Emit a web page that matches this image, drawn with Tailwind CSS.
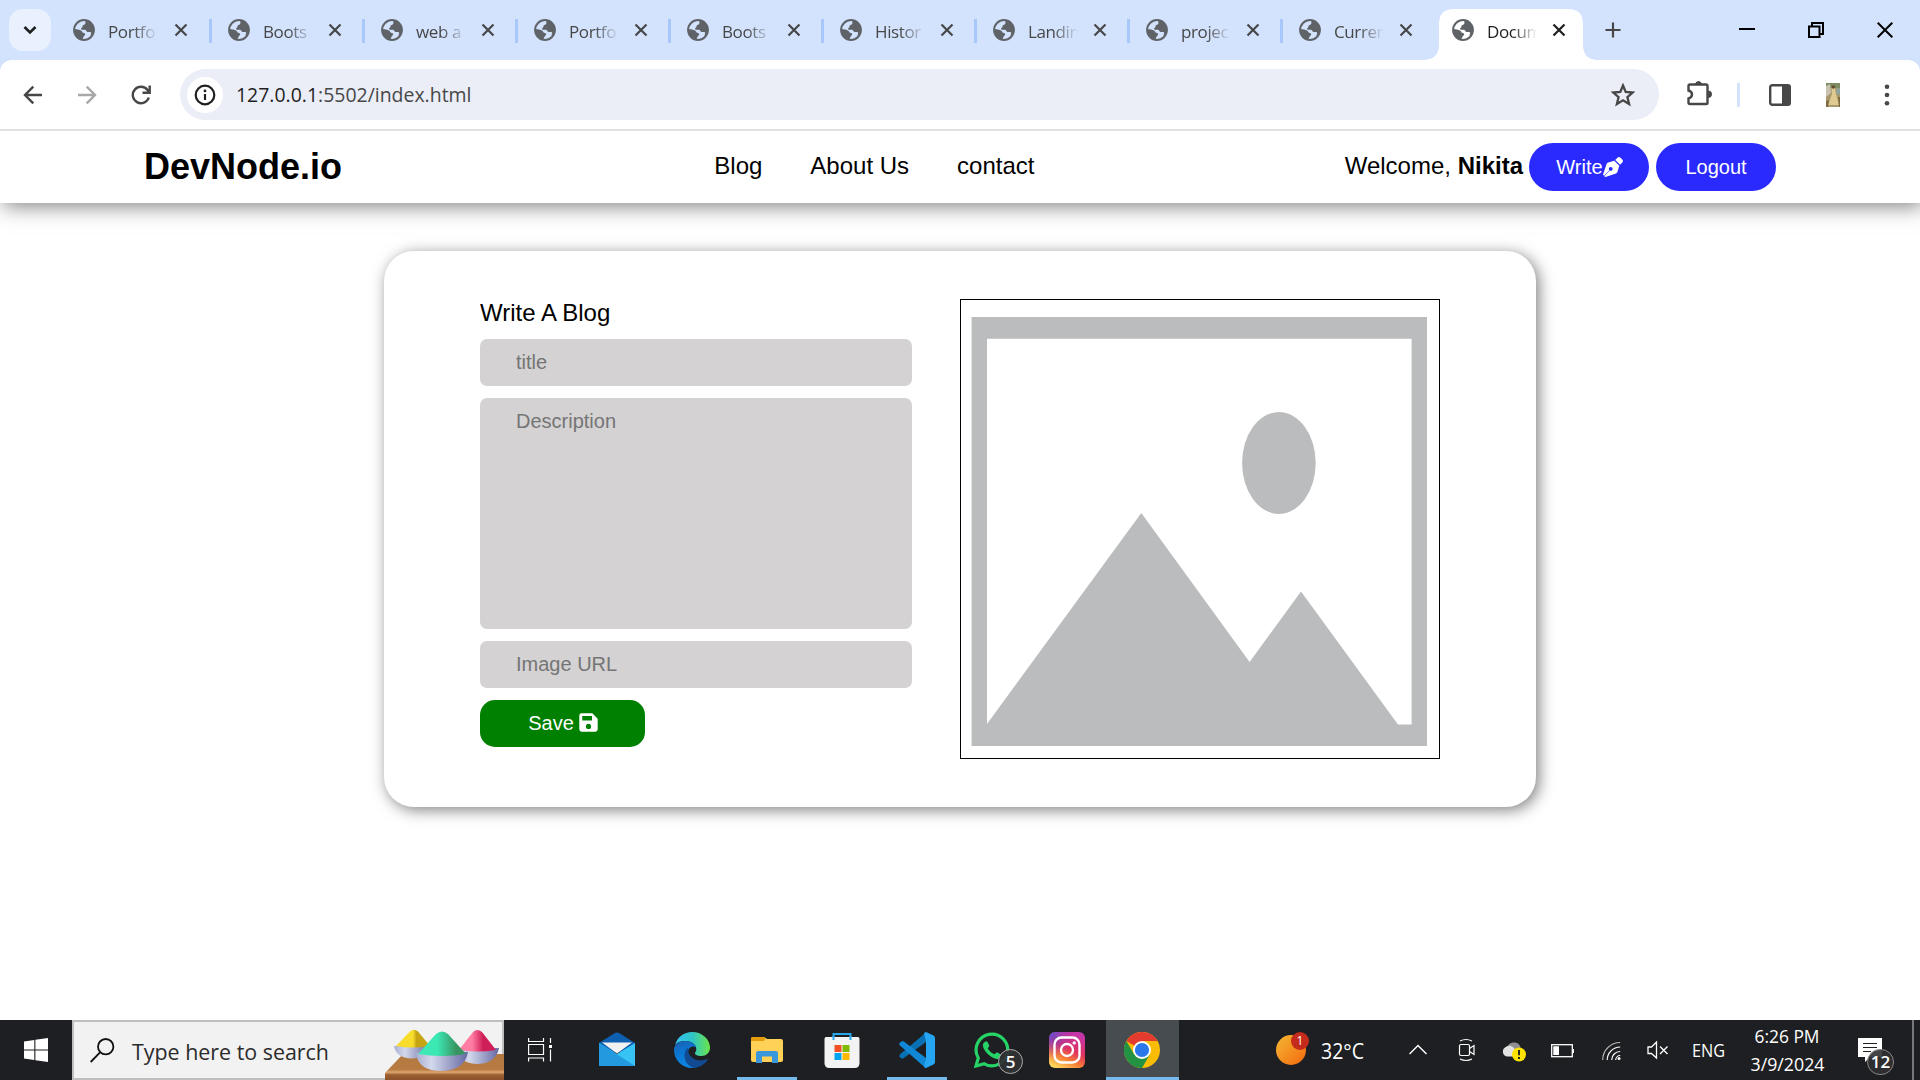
<!DOCTYPE html>
<html lang="en">
<head>
<meta charset="utf-8">
<title>Document</title>
<script src="https://cdn.jsdelivr.net/npm/@tailwindcss/browser@4"></script>
</head>
<body class="w-[1920px] h-[1080px] overflow-hidden bg-white flex flex-col font-['Open_Sans',sans-serif]">

<svg class="hidden">
  <symbol id="globe" viewBox="0 0 22 22">
    <circle cx="11" cy="11" r="9.900" fill="none" stroke="#5f6368" stroke-width="2"/>
    <path fill="#5f6368" d="M12.500 1.500 C12 4 13 4.500 11.500 5.500 C10 6.300 9.500 6 9.500 7.500 C9.500 9 8 8.500 8 10 C8 11 10 10.500 12 10.700 C13.600 11 13 12.600 14.500 13 C16 13.400 17 12.500 18 13.500 C18.500 14.200 17.500 16 17 17 C19.500 15.500 21 13 21 10.500 C21 6 17.500 2 12.500 1.500 Z"/>
    <path fill="#5f6368" d="M1.300 10 C4 10.500 6.500 10.500 8 11.500 C9.500 12.500 9 13.800 11 14 C12.500 14.300 12.500 15.500 11.500 16.500 C10.500 17.500 10 18.500 9.500 20.500 C4.500 20 1 15.500 1.300 10 Z"/>
  </symbol>
  <symbol id="cross" viewBox="0 0 14 14">
    <path d="M1.500 1.500 L12.500 12.500 M12.500 1.500 L1.500 12.500" stroke="currentColor" stroke-width="2.200" fill="none"/>
  </symbol>
</svg>

<!-- Tab strip -->
<header class="h-[60px] shrink-0 bg-[#d3e3fd] flex text-[17px] text-[#474747]">
  <div class="w-[57px] pl-[9px] pt-[9px]">
    <div class="w-[42px] h-[42px] rounded-[14px] bg-[#e9f0fe] flex items-center justify-center">
      <svg class="w-[14px] h-[10px]" viewBox="0 0 14 10"><path d="M1.500 2 L7 7.500 L12.500 2" fill="none" stroke="#1f1f1f" stroke-width="2.600"/></svg>
    </div>
  </div>
  <nav id="tabs" class="flex"></nav>
  <div class="flex-1 flex items-center text-black">
    <svg class="w-4 h-4 ml-[17px]" viewBox="0 0 16 16"><path d="M8 0.500 V15.500 M0.500 8 H15.500" stroke="#474747" stroke-width="2.200"/></svg>
    <div class="ml-auto flex items-center gap-[53px] pr-[27px]">
      <svg class="w-4 h-4" viewBox="0 0 16 16"><path d="M0 7 H16" stroke="#000" stroke-width="2"/></svg>
      <svg class="w-4 h-4" viewBox="0 0 16 16" fill="none" stroke="#000" stroke-width="2"><path d="M1 4.500 H11.500 V15 H1 Z M4 4 V1 H15 V12 H12"/></svg>
      <svg class="w-4 h-4" viewBox="0 0 16 16"><path d="M0.700 0.700 L15.300 15.300 M15.300 0.700 L0.700 15.300" stroke="#000" stroke-width="2"/></svg>
    </div>
  </div>
</header>

<!-- Address bar -->
<div class="bg-[#d3e3fd] shrink-0">
  <div class="h-[71px] rounded-t-xl bg-white border-b-2 border-[#e1e1e1] flex items-center">
    <svg class="w-[20px] h-[20px] ml-[23px]" viewBox="0 0 20 20" fill="none" stroke="#474747" stroke-width="2.400"><path d="M19 10 H2.500 M10.300 1.700 L2 10 L10.300 18.300"/></svg>
    <svg class="w-[20px] h-[20px] ml-[34px]" viewBox="0 0 20 20" fill="none" stroke="#a8a8a8" stroke-width="2.400"><path d="M1 10 H17.500 M9.700 1.700 L18 10 L9.700 18.300"/></svg>
    <svg class="w-[20px] h-[20px] ml-[34px]" viewBox="0 0 20 20" fill="none" stroke="#474747" stroke-width="2.400"><path d="M17.800 12.500 A8.200 8.200 0 1 1 16.500 5 L18.500 7.500 M18.700 0.500 V7.700 H11.500"/></svg>
    <div class="ml-[29px] w-[1479px] h-[51px] rounded-full bg-[#ebeef7] flex items-center pl-[7px] pr-[24px]">
      <div class="w-9 h-9 rounded-full bg-white flex items-center justify-center">
        <svg class="w-[22px] h-[22px]" viewBox="0 0 22 22"><circle cx="11" cy="11" r="9.300" fill="none" stroke="#1f1f1f" stroke-width="2.200"/><path d="M11 10 V16" stroke="#1f1f1f" stroke-width="2.200"/><circle cx="11" cy="6.900" r="1.400" fill="#1f1f1f"/></svg>
      </div>
      <svg class="w-[240px] h-[30px] ml-[12px]" viewBox="0 0 240 30"><text x="1" y="22" font-size="20.500" textLength="235.500" lengthAdjust="spacingAndGlyphs" fill="#474747"><tspan fill="#1f1f1f">127.0.0.1</tspan>:5502/index.html</text></svg>
      <svg class="w-[24px] h-[24px] ml-auto" viewBox="0 0 24 24"><path d="M12 2.500 L14.700 9 L21.700 9.500 L16.400 14.100 L18.100 21 L12 17.300 L5.900 21 L7.600 14.100 L2.300 9.500 L9.300 9 Z" fill="none" stroke="#474747" stroke-width="2.300"/></svg>
    </div>
    <svg class="w-[26px] h-[26px] ml-[27px] -mt-[3px]" viewBox="0 0 26 26"><path d="M4 4.500 H20 Q21.500 4.500 21.500 6 V23 Q21.500 24 20 24 H4 Q2.500 24 2.500 22.500 V18.500 Q6 17.500 6 14.500 Q6 11.500 2.500 10.500 V6 Q2.500 4.500 4 4.500 Z" fill="none" stroke="#474747" stroke-width="2.400"/><path d="M9.500 3.700 A3.200 3.200 0 0 1 15.500 3.700 Z M22.300 11 A3.200 3.200 0 0 1 22.300 17.500 Z" fill="#474747" stroke="#474747"/></svg>
    <div class="w-[3px] h-6 bg-[#d3e3fd] ml-[25px]"></div>
    <svg class="w-[22px] h-[22px] ml-[29px]" viewBox="0 0 22 22"><rect x="1.200" y="1.200" width="19.600" height="19.600" rx="2" fill="none" stroke="#474747" stroke-width="2.400"/><path d="M13 1 H20 V21 H13 Z" fill="#474747"/></svg>
    <svg class="w-[14px] h-[24px] ml-[35px]" viewBox="0 0 14 24"><rect width="14" height="24" fill="#a8986c"/><path d="M0 0 H14 V5 H0 Z" fill="#7f8c62"/><path d="M0 3 L4 1 L5 10 L0 14 Z" fill="#c9c3b0"/><path d="M10 6 L14 5 V11 L11 12 Z" fill="#8fa3a0"/><path d="M5.500 5 H9 L10 11 L13 22 H2 L6 11 Z" fill="#dfca92"/><circle cx="7.300" cy="4" r="1.800" fill="#6a4b32"/><path d="M0 18 L3 17 L2 24 H0 Z M12 14 H14 V24 H13 Z" fill="#7d6a3e"/></svg>
    <svg class="w-[6px] h-[24px] ml-[44px]" viewBox="0 0 6 24" fill="#474747"><circle cx="3" cy="3.700" r="2.300"/><circle cx="3" cy="12" r="2.300"/><circle cx="3" cy="20.300" r="2.300"/></svg>
  </div>
</div>

<!-- Web page -->
<div class="flex-1 flex flex-col bg-white text-black overflow-hidden font-['Liberation_Sans',Arial,sans-serif]">
  <div class="h-[72px] shrink-0 flex items-center justify-between px-[144px] text-2xl shadow-[3px_3px_20px_rgba(0,0,0,0.5)]">
    <h1 class="text-[36px] font-bold">DevNode.io</h1>
    <ul class="flex gap-12 ml-[62px] pb-[2px]"><li>Blog</li><li>About Us</li><li>contact</li></ul>
    <div class="flex items-center">
      <span class="pb-[2px]">Welcome, <b>Nikita</b></span>
      <button class="ml-[6px] w-[120px] h-12 rounded-full bg-[#2a2aff] text-white text-xl flex items-center justify-center pl-px">Write<svg class="w-[20px] h-[20px]" viewBox="0 0 512 512" fill="#fff"><path d="M368.400 18.300 L312.700 74.100 L437.900 199.300 L493.700 143.600 C515.600 121.700 515.600 86.300 493.700 64.400 L447.600 18.300 C425.700 -3.600 390.300 -3.600 368.400 18.300 Z M288 94.600 L278.800 97.400 L134.700 140.600 C114.800 146.600 99 161.800 92.200 181.400 L0 448 L22.300 481.600 L164.700 339.200 A48 48 0 1 1 192 352 Q184 352 172.800 347.300 L30.400 489.700 L64 512 L330.600 419.700 C350.200 412.900 365.400 397.200 371.400 377.200 L417.400 224 Z"/></svg></button>
      <button class="ml-[7px] w-[120px] h-12 rounded-full bg-[#2a2aff] text-white text-xl">Logout</button>
    </div>
  </div>

  <main class="mt-12 mx-auto w-[1152px] h-[556px] rounded-[30px] px-24 py-12 flex justify-between shadow-[3px_3px_15px_rgba(0,0,0,0.5)]">
    <form class="w-[432px] flex flex-col gap-3">
      <h2 class="text-2xl leading-7">Write A Blog</h2>
      <input class="h-[47px] rounded-[7px] bg-[#d4d2d3] px-9 text-xl placeholder:text-[#757575]" placeholder="title">
      <textarea class="h-[231px] rounded-[7px] bg-[#d4d2d3] px-9 py-3 text-xl leading-[23px] resize-none placeholder:text-[#757575]" placeholder="Description"></textarea>
      <input class="h-[47px] rounded-[7px] bg-[#d4d2d3] px-9 text-xl placeholder:text-[#757575]" placeholder="Image URL">
      <button type="button" class="w-[165px] h-[47px] rounded-[15px] bg-[#008000] text-white text-xl flex items-center justify-center gap-[5px] pb-[2px] pl-px">Save
        <svg class="w-[19px] h-[19px]" viewBox="0 0 19 19"><path fill="#fff" fill-rule="evenodd" d="M2.500 0.300 H13.300 L18.700 5.700 V16.300 Q18.700 18.700 16.300 18.700 H2.700 Q0.300 18.700 0.300 16.300 V2.700 Q0.300 0.300 2.500 0.300 Z M3.200 3 V7.500 H13 V3 Z M9.500 10.800 A2.600 2.600 0 1 0 9.500 16 A2.600 2.600 0 1 0 9.500 10.800 Z"/></svg>
      </button>
    </form>
    <div class="w-[480px] h-[460px] border border-black">
      <svg class="w-[478px] h-[458px]" viewBox="961 300 478 458">
        <path fill="#babcbd" fill-rule="evenodd" d="M971.600 317 H1427 V746 H971.600 Z M987 338.700 V724 L1141.300 513 L1249.600 662 L1301 591.500 L1398 724.500 H1411.600 V338.700 Z"/>
        <ellipse cx="1278.900" cy="463" rx="36.800" ry="51" fill="#babcbd"/>
      </svg>
    </div>
  </main>
</div>

<!-- Taskbar -->
<footer class="h-[60px] shrink-0 bg-[#1e1f22] flex items-center text-white">
  <div class="w-[72px] flex justify-center">
    <svg class="w-6 h-6" viewBox="0 0 24 24" fill="#fff"><path d="M0 3.500 L10.300 2 V11.400 H0 Z M11.400 1.800 L24 0 V11.400 H11.400 Z M0 12.500 H10.300 V22 L0 20.500 Z M11.400 12.500 H24 V24 L11.400 22.200 Z"/></svg>
  </div>
  <div class="w-[432px] h-[60px] bg-[#f2f2f2] border-2 border-[#bfbfbf] flex items-center pl-4">
    <svg class="w-[25px] h-[25px]" viewBox="0 0 25 25" fill="none" stroke="#111" stroke-width="1.800"><circle cx="15.700" cy="8.700" r="7.700"/><path d="M10.300 14.200 L0.700 24"/></svg>
    <svg class="w-[200px] h-[34px] ml-[15px]" viewBox="0 0 200 34"><text x="2" y="27" font-size="22" textLength="197" lengthAdjust="spacingAndGlyphs" fill="#2b2b2b">Type here to search</text></svg>
    <svg class="w-[120px] h-[60px] ml-auto -mr-[2px] -my-[2px] shrink-0" viewBox="0 0 120 60">
      <defs>
        <linearGradient id="bowl"><stop offset="0" stop-color="#a9afd2"/><stop offset=".3" stop-color="#d3d9ec"/><stop offset="1" stop-color="#6668a3"/></linearGradient>
        <linearGradient id="yel"><stop offset=".5" stop-color="#f8dc2c"/><stop offset=".6" stop-color="#c6a514"/></linearGradient>
        <linearGradient id="grn"><stop offset=".4" stop-color="#3ce8b4"/><stop offset=".8" stop-color="#389562"/></linearGradient>
        <linearGradient id="pnk"><stop offset=".35" stop-color="#ff7da2"/><stop offset=".65" stop-color="#cf1f58"/></linearGradient>
        <linearGradient id="wood" x2="0" y2="1"><stop offset="0" stop-color="#b27a40"/><stop offset=".6" stop-color="#b87b42"/><stop offset=".7" stop-color="#dda870"/><stop offset=".8" stop-color="#9a5f31"/><stop offset="1" stop-color="#8c522a"/></linearGradient>
      </defs>
      <path d="M1 53 L19 34 H120 V60 H1 Z" fill="url(#wood)"/>
      <path d="M10 26 Q12 38 28 38.500 Q43 38 46 26 Z" fill="url(#bowl)"/><path d="M12 26 L26 11.500 Q30 8 34 11.500 L46 26 Q28 29 12 26 Z" fill="url(#yel)"/>
      <path d="M72 29 Q76 44 94 44 Q112 43 115 28 Z" fill="url(#bowl)"/><path d="M75 30 L89 12 Q93 8 98 12 L112 30 Q94 33 75 30 Z" fill="url(#pnk)"/>
      <path d="M32 33 Q34 51 58 51 Q81 50 84 32 Z" fill="url(#bowl)"/><path d="M34 34 L52 14 Q58 9 64 14 L82 34 Q58 38 34 34 Z" fill="url(#grn)"/>
    </svg>
  </div>
  <div class="w-[72px] flex justify-center">
    <svg class="w-6 h-6" viewBox="0 0 24 24" fill="none" stroke="#fff" stroke-width="1.200"><path d="M0.600 0 V3.500 H15.500 V0 M0.600 6.500 H15.500 V16.500 H0.600 Z M0.600 23.500 V20 H15.500 V23.500 M22.500 0 V5 M22.500 11.500 V23.500"/><path d="M21 7 H24 V10 H21 Z" fill="#fff" stroke="none"/></svg>
  </div>
  <div class="w-[82px] flex justify-center">
    <svg class="w-9 h-9" viewBox="0 0 36 36"><path d="M0 11 L15 1.500 Q18 -0.500 21 1.500 L36 11 V20 H0 Z" fill="#0f5fb0"/><path d="M0 11 L18 22 L36 11 V34 H0 Z" fill="#37c3f4"/><path d="M0 11 L36 34 H0 Z" fill="#2399e0"/><path d="M3 10.500 H33 L18 21.500 Z" fill="#f1f1f1"/></svg>
  </div>
  <div class="w-[68px] flex justify-center">
    <svg class="w-9 h-9" viewBox="0 0 36 36">
      <defs><linearGradient id="e1"><stop offset="0" stop-color="#35c1f1"/><stop offset=".5" stop-color="#2fc5c8"/><stop offset="1" stop-color="#6be547"/></linearGradient><linearGradient id="e2" x2=".4" y2="1"><stop offset="0" stop-color="#1a5fae"/><stop offset=".5" stop-color="#0b78d4"/><stop offset="1" stop-color="#0c86df"/></linearGradient></defs>
      <path d="M1 13 C3.500 5 10 0 18 0 C29 0 36 8 36 15.500 C36 21 32 24 27.500 24 C23 24 20.500 22.500 21 21 C21.500 20 22.300 19 22.300 17 C22.300 12 17 9 11.500 9 C7 9 3 10.500 1 13 Z" fill="url(#e1)"/>
      <path d="M0 18 C0 12.500 5 9 11.500 9 C17 9 21.500 12 22.300 15.500 C19 13 14 15 14 20.500 C14 28 21 33 27 32 C24.500 34.700 21 36 18 36 C8 36 0 28 0 18 Z" fill="url(#e2)"/>
      <path d="M14.200 15.500 C8 20 9.500 33 20 35.900 C26 35.500 31 32 33.800 27.500 C34 26.700 33.500 26.600 33 27 C26 30.500 14.500 27.500 14.200 18 Z" fill="#124b92"/>
    </svg>
  </div>
  <div class="w-[82px] h-[60px] flex flex-col items-center">
    <svg class="w-8 h-[28px] mt-[16px]" viewBox="0 0 32 28"><path d="M0 3 Q0 1 2 1 H13 L16 3 H30 Q32 3 32 5 V24 Q32 26 30 26 H2 Q0 26 0 24 Z" fill="#ffd257"/><path d="M0 3 Q0 1 2 1 H12.500 Q14 1 14.500 2.500 L13 5 H0 Z" fill="#e39d0c"/><path d="M5 17 Q5 15 7 15 H25 Q27 15 27 17 V27 H21 V20.500 H11 V27 H5 Z" fill="#3b97dc"/></svg>
    <div class="mt-auto w-[60px] h-[3px] bg-[#76b9ed]"></div>
  </div>
  <div class="w-[68px] flex justify-center">
    <svg class="w-9 h-9" viewBox="0 0 36 36"><path d="M9.500 8 V2 H26.500 V8" fill="none" stroke="#28a8ea" stroke-width="2"/><path d="M0.500 7 Q0.500 5 2 5 H34 Q35.500 5 35.500 7 V31 Q35.500 36 30.500 36 H5.500 Q0.500 36 0.500 31 Z" fill="#f3f3f3"/><path d="M9.500 8 V4 M26.500 8 V4" stroke="#28a8ea" stroke-width="2"/><path d="M10.500 13 H17.500 V20 H10.500 Z" fill="#f25022"/><path d="M18.500 13 H25.500 V20 H18.500 Z" fill="#7fba00"/><path d="M10.500 21 H17.500 V28 H10.500 Z" fill="#00a4ef"/><path d="M18.500 21 H25.500 V28 H18.500 Z" fill="#ffb900"/></svg>
  </div>
  <div class="w-[82px] h-[60px] flex flex-col items-center">
    <svg class="w-9 h-9 mt-3" viewBox="0 0 36 36"><path d="M27 0.500 L0.800 22.500 Q0 24 0.500 25 L3.500 27 L27 10 Z" fill="#0870b5"/><path d="M27 26 L4.500 9.200 Q3.500 8.700 2.500 9.400 L0.500 11 Q-0.300 12 1 13.500 L26 35.500 Z" fill="#1088d6"/><path d="M27 0 L34.500 3.500 Q36 4.300 36 6 V30 Q36 31.700 34.500 32.500 L27 36 Q25.500 36 25 34.500 L27 26 V9 L25 1.500 Q25.500 0.300 27 0 Z" fill="#26a5f2"/></svg>
    <div class="mt-auto w-[60px] h-[3px] bg-[#76b9ed]"></div>
  </div>
  <div class="w-[68px] flex justify-center">
    <div class="relative w-9 h-9">
      <svg class="w-9 h-9" viewBox="0 0 36 36"><path d="M2 34 L4.300 26 A15.800 15.800 0 1 1 10.300 31.800 Z" fill="none" stroke="#25d366" stroke-width="3.200"/><path d="M11.500 9.500 Q12.500 9 13.500 10 L15.300 13.500 Q15.500 14.500 13.700 16.300 Q16 20.700 20.500 22.300 Q22.300 20 23.300 20.500 L27 22.500 Q27.500 25.500 24.500 26.700 Q20 28 13.500 21.800 Q8 16 9 12 Q10 10 11.500 9.500 Z" fill="#25d366"/></svg>
      <div class="absolute left-[24px] top-[17px] w-[25px] h-[25px] rounded-full border border-[#aaa] bg-[#303234]/95 text-[17px] leading-[23px] font-semibold text-center">5</div>
    </div>
  </div>
  <div class="w-[80px] pl-[23px]">
    <svg class="w-9 h-9" viewBox="0 0 36 36"><defs><linearGradient id="ig" x1=".25" y1="1" x2=".75" y2="0"><stop offset="0" stop-color="#fed65c"/><stop offset=".3" stop-color="#f77b36"/><stop offset=".55" stop-color="#e0325f"/><stop offset="1" stop-color="#c436ad"/></linearGradient><radialGradient id="ig2" cx="0" cy="0" r=".75"><stop offset="0" stop-color="#4f55d8"/><stop offset="1" stop-color="#a02fc0" stop-opacity="0"/></radialGradient></defs><rect width="36" height="36" rx="6" fill="url(#ig)"/><rect width="36" height="36" rx="6" fill="url(#ig2)"/><g fill="none" stroke="#fff" stroke-width="2.400"><rect x="5.500" y="5.500" width="25" height="25" rx="7"/><circle cx="18" cy="18" r="6"/></g><circle cx="25.200" cy="10.900" r="1.700" fill="#fff"/></svg>
  </div>
  <div class="w-[73px] h-[60px] bg-[#474c50] border-b-3 border-[#76b9ed] pl-[18px] pt-3">
    <svg class="w-9 h-9" viewBox="0 0 36 36"><circle cx="18" cy="18" r="18" fill="#fbbc05"/><path d="M18 18 L2.400 9 A18 18 0 0 1 33.600 9 Z" fill="#e33b2e"/><path d="M18 9 H33.600 Q34 10 18 18 Z" fill="#fbbc05"/><path d="M2.400 9 A18 18 0 0 0 18 36 L25.800 22.500 L10.200 22.500 Z" fill="#229342"/><circle cx="18" cy="18" r="9" fill="#fff"/><circle cx="18" cy="18" r="7.100" fill="#2a78ea"/></svg>
  </div>
  <div class="relative ml-[97px] w-[30px] h-[30px]">
    <div class="w-[30px] h-[30px] rounded-full bg-linear-to-br from-[#f2b731] to-[#f2660c]"></div>
    <div class="absolute left-[15px] -top-[3px] w-[18px] h-[18px] rounded-full bg-[#c42b1c] text-[12px] leading-[18px] text-center">1</div>
  </div>
  <svg class="w-[46px] h-[30px] ml-[14px]" viewBox="0 0 46 30"><text x="1" y="24" font-size="21.500" textLength="43" lengthAdjust="spacingAndGlyphs" fill="#fff">32°C</text></svg>
  <svg class="w-[18px] h-[12px] ml-[43px]" viewBox="0 0 18 12"><path d="M0.500 10 L9 1.500 L17.500 10" fill="none" stroke="#fff" stroke-width="1.500"/></svg>
  <svg class="w-[18px] h-[24px] ml-[31px]" viewBox="0 0 18 24" fill="none" stroke="#fff" stroke-width="1.200"><rect x="1.500" y="6.500" width="10" height="11" rx="1.500"/><path d="M11.500 10.500 L16 7.500 V16.500 L11.500 13.500 M2 3 Q8 0 14 3 M2 21 Q8 24 14 21"/></svg>
  <svg class="w-[26px] h-[22px] ml-[25px] mt-[2px]" viewBox="0 0 26 22"><path d="M6 9 A7 7 0 0 1 19.500 7 L20 15 H7 Z" fill="#8f8f8f"/><path d="M6 16.500 A5 5 0 0 1 4 7.500 A6 6 0 0 1 13 8 L18 16.500 Z" fill="#e2e2e2"/><circle cx="18" cy="14.500" r="7" fill="#fde300"/><path d="M18 10 V15.300 M18 17 V19" stroke="#222" stroke-width="1.900"/></svg>
  <svg class="w-[24px] h-[14px] ml-[24px] mt-[2px]" viewBox="0 0 24 14"><rect x="0.700" y="0.700" width="20.600" height="12" fill="none" stroke="#fff" stroke-width="1.300"/><path d="M2.300 2.300 H8 V11 H2.300 Z M22 5 H23 V9 H22 Z" fill="#fff"/></svg>
  <svg class="w-[20px] h-[20px] ml-[27px] mt-[2px]" viewBox="0 0 20 20" fill="none" stroke="#fff" stroke-width="1.200"><path d="M0.700 19 A17.500 17.500 0 0 1 18.200 1.500" stroke="#bbb"/><path d="M5.200 19 A13 13 0 0 1 18.200 6 M9.700 19 A8.500 8.500 0 0 1 18.200 10.500 M13.700 19 A4.500 4.500 0 0 1 18.200 14.500"/><circle cx="17" cy="17.500" r="1.500" fill="#fff" stroke="none"/></svg>
  <svg class="w-[22px] h-[20px] ml-[25px]" viewBox="0 0 22 20" fill="none" stroke="#fff" stroke-width="1.300"><path d="M1 7 H4.500 L9.500 2 V18 L4.500 13.500 H1 Z M13 6.500 L20.500 14 M20.500 6.500 L13 14"/></svg>
  <svg class="w-[36px] h-[26px] ml-[22px]" viewBox="0 0 36 26"><text x="1" y="20" font-size="18" textLength="33" lengthAdjust="spacingAndGlyphs" fill="#fff">ENG</text></svg>
  <svg class="w-[76px] h-[60px] ml-[23px]" viewBox="0 0 76 60" fill="#fff" font-size="17.500"><text x="4.500" y="23" textLength="65" lengthAdjust="spacingAndGlyphs">6:26 PM</text><text x="0.500" y="51" textLength="74" lengthAdjust="spacingAndGlyphs">3/9/2024</text></svg>
  <div class="relative ml-[32px] w-6 h-6">
    <svg class="w-6 h-6" viewBox="0 0 24 24"><path d="M0 0 H24 V19 H12 L7 24 V19 H0 Z" fill="#fff"/><path d="M5 5.500 H19 M5 9.500 H19 M5 13.500 H13" stroke="#1e1f22" stroke-width="1.200"/></svg>
    <div class="absolute left-[9px] top-[11px] w-[27px] h-[26px] rounded-full border border-[#888] bg-[#303032]/90 text-[17px] leading-[24px] font-semibold text-center">12</div>
  </div>
  <div class="ml-[30px] w-[2px] h-[60px] bg-[#77777a]"></div>
</footer>

<script>
  const titles = ['Portfo', 'Boots', 'web a', 'Portfo', 'Boots', 'Histor', 'Landin', 'projec', 'Curren', 'Docum'];
  document.getElementById('tabs').innerHTML = titles.map((t, i) => {
    const active = i === titles.length - 1;
    const beforeActive = i === titles.length - 2;
    const width = i === 0 ? 'w-[154px] pl-4' : 'w-[153px] pl-[17px]';
    const shape = active ? `<svg class="absolute -left-[11px] top-[9px] w-[173px] h-[51px]" viewBox="0 0 173 51"><path d="M0 51 Q15 50 15 36 V15 Q15 0 30 0 H144 Q159 0 159 15 V36 Q159 50 173 51 Z" fill="#fff"/></svg>` : '';
    const sep = active || beforeActive ? '' : '<div class="absolute -right-px top-[19px] w-[3px] h-6 bg-[#a8c7fa]"></div>';
    return `<div class="relative h-[60px] flex items-center ${width} ${active ? 'text-[#1f1f1f]' : ''}">
      ${shape}
      <svg class="relative w-[22px] h-[22px] shrink-0"><use href="#globe"/></svg>
      <span class="relative ml-[13px] w-[50px] mt-[3px] overflow-hidden whitespace-nowrap tracking-[-0.4px] mask-r-from-50% mask-r-to-100%">${t}</span>
      ${sep}
      <svg class="relative w-[14px] h-[14px] ml-[15px] shrink-0 ${i === 0 ? 'left-px' : ''}"><use href="#cross"/></svg>
    </div>`;
  }).join('');
</script>
</body>
</html>
